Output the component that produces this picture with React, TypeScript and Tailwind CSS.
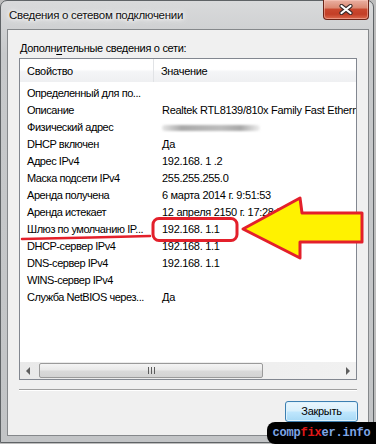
import React from "react";

const rows: [string, string][] = [
  ["Определенный для по...", ""],
  ["Описание", "Realtek RTL8139/810x Family Fast Ethernet NIC"],
  ["Физический адрес", "#blur"],
  ["DHCP включен", "Да"],
  ["Адрес IPv4", "192.168. 1 .2"],
  ["Маска подсети IPv4", "255.255.255.0"],
  ["Аренда получена", "6 марта 2014 г. 9:51:53"],
  ["Аренда истекает", "12 апреля 2150 г. 17:28:31"],
  ["Шлюз по умолчанию IP...", "192.168. 1.1"],
  ["DHCP-сервер IPv4", "192.168. 1.1"],
  ["DNS-сервер IPv4", "192.168. 1.1"],
  ["WINS-сервер IPv4", ""],
  ["Служба NetBIOS через...", "Да"],
];

const Arrow = ({ dir }: { dir: "left" | "right" }) => (
  <svg width="5" height="8" viewBox="0 0 5 8">
    {dir === "left" ? (
      <polygon points="4,0 4,8 0,4" fill="#5e5e5e" />
    ) : (
      <polygon points="1,0 1,8 5,4" fill="#5e5e5e" />
    )}
  </svg>
);

export default function App() {
  return (
    <div className="relative w-[376px] h-[444px] bg-[#bdbdbd] overflow-hidden font-['Liberation_Sans',Arial,sans-serif] text-[11px] tracking-[-0.3px] text-black">
      {/* window */}
      <div className="w-[374px] h-[443px] flex flex-col border border-[#5f6366] rounded-t-[7px] bg-[linear-gradient(180deg,#d9dadb_0%,#c7c9cb_12%,#c2c4c6_100%)] pl-[6px] pr-[4px] pb-[6px]">
        {/* title bar */}
        <div className="relative h-[28px] shrink-0 flex items-center">
          <span className="pl-[2px] pt-[2px] text-[11.5px] text-[#111] [text-shadow:0_0_9px_#fff,0_0_5px_#fff,0_0_3px_#f4f4f4]">
            Сведения о сетевом подключении
          </span>
          <div className="absolute right-[0px] top-[-1px] w-[46px] h-[20px] rounded-b-[4px] border border-t-0 border-[#6b2418] bg-[linear-gradient(180deg,#eab0a2_0%,#dc8a74_40%,#c9472e_50%,#c33f27_75%,#dc6a4e_100%)] flex items-center justify-center shadow-[inset_0_0_0_1px_rgba(255,210,200,0.45)]">
            <svg width="14" height="11" viewBox="0 0 14 11">
              <path d="M2.5 2 L11.5 9 M11.5 2 L2.5 9" stroke="#3b2b2a" strokeWidth="4.2" strokeLinecap="round" />
              <path d="M2.5 2 L11.5 9 M11.5 2 L2.5 9" stroke="#fff" strokeWidth="2.2" strokeLinecap="round" />
            </svg>
          </div>
        </div>

        {/* client area */}
        <div className="flex-1 flex flex-col border border-[#85888b] bg-[#f0f0f0]">
          <div className="mt-[10px] pl-[12px] leading-[16px]">
            Дополн<span className="underline underline-offset-2">и</span>тельные сведения о сети:
          </div>

          {/* list view */}
          <div className="mt-[2px] mx-[11px] h-[322px] flex flex-col border border-[#828790] bg-white overflow-hidden">
            <div className="h-[23px] shrink-0 flex bg-[linear-gradient(180deg,#ffffff_0%,#ffffff_45%,#f4f5f7_55%,#eff0f2_100%)]">
              <div className="w-[133px] shrink-0 pl-[7px] pt-[4px] leading-[16px]">Свойство</div>
              <div className="w-px shrink-0 bg-[#e1e3e6]" />
              <div className="flex-1 pl-[7px] pt-[4px] leading-[16px] whitespace-nowrap">Значение</div>
            </div>
            <div className="flex-1 pt-[3px] overflow-hidden">
              {rows.map(([k, v], i) => (
                <div key={i} className="h-[17px] flex items-center whitespace-nowrap">
                  <div className="w-[134px] shrink-0 pl-[7px] tracking-[-0.45px]">{k}</div>
                  <div className="pl-[8px]">
                    {v === "#blur" ? (
                      <div className="w-[98px] h-[6px] rounded-full blur-[1px] bg-[linear-gradient(90deg,#e6e6e6_0%,#a9a9a9_20%,#bdbdbd_60%,#a8a8a8_80%,#f0f0f0_100%)]" />
                    ) : (
                      v
                    )}
                  </div>
                </div>
              ))}
            </div>
            {/* horizontal scrollbar */}
            <div className="h-[17px] shrink-0 flex items-center bg-[linear-gradient(90deg,#e9e9e9,#f1f1f1)]">
              <div className="w-[17px] h-full flex items-center justify-center">
                <Arrow dir="left" />
              </div>
              <div className="w-[224px] h-[15px] ml-[2px] rounded-[2px] border border-[#9a9a9a] bg-[linear-gradient(180deg,#f4f4f4_0%,#e9e9e9_45%,#d9d9d9_55%,#d3d3d3_100%)] flex items-center justify-center gap-[2px]">
                <div className="w-px h-[7px] bg-[#5c5c5c]" />
                <div className="w-px h-[7px] bg-[#5c5c5c]" />
                <div className="w-px h-[7px] bg-[#5c5c5c]" />
              </div>
              <div className="flex-1" />
              <div className="w-[17px] h-full flex items-center justify-center">
                <Arrow dir="right" />
              </div>
            </div>
          </div>

          {/* separator */}
          <div className="mt-[9px] mx-[11px] h-px bg-[#a0a0a0] border-b border-white box-content" />

          <div className="mt-[10px] flex justify-end pr-[10px]">
            <button className="w-[73px] h-[21px] rounded-[3px] border border-[#3c7fb1] bg-[linear-gradient(180deg,#eaf6fd_0%,#d9f0fc_45%,#bee6fd_55%,#a7d9f5_100%)] shadow-[inset_0_0_0_1px_#ddf2fd] leading-[19px] text-[11px]">
              Закрыть
            </button>
          </div>
        </div>
      </div>

      {/* annotations */}
      <svg className="absolute left-0 top-0 pointer-events-none" width="376" height="444">
        <path d="M22 239 C 60 238.5, 110 237, 150 236" stroke="#e3202b" strokeWidth="2.5" fill="none" strokeLinecap="round" />
        <rect x="153" y="218.5" width="84" height="22" rx="6" stroke="#e3202b" strokeWidth="3" fill="none" />
        <polygon
          points="243,229 300,198 302,213 362,213 362,242 300,242 300,258"
          fill="#fff200"
          stroke="#e3202b"
          strokeWidth="3"
          strokeLinejoin="round"
        />
      </svg>

      {/* watermark */}
      <div className="absolute right-0 bottom-0 w-[109px] h-[22px] rounded-l-[8px] bg-black flex items-center justify-center font-['Liberation_Mono',monospace] font-bold text-[12px] tracking-[-0.2px] text-[#7fa6e6]">
        comp<span className="text-[#e01818]">fix</span>er.info
      </div>
    </div>
  );
}
